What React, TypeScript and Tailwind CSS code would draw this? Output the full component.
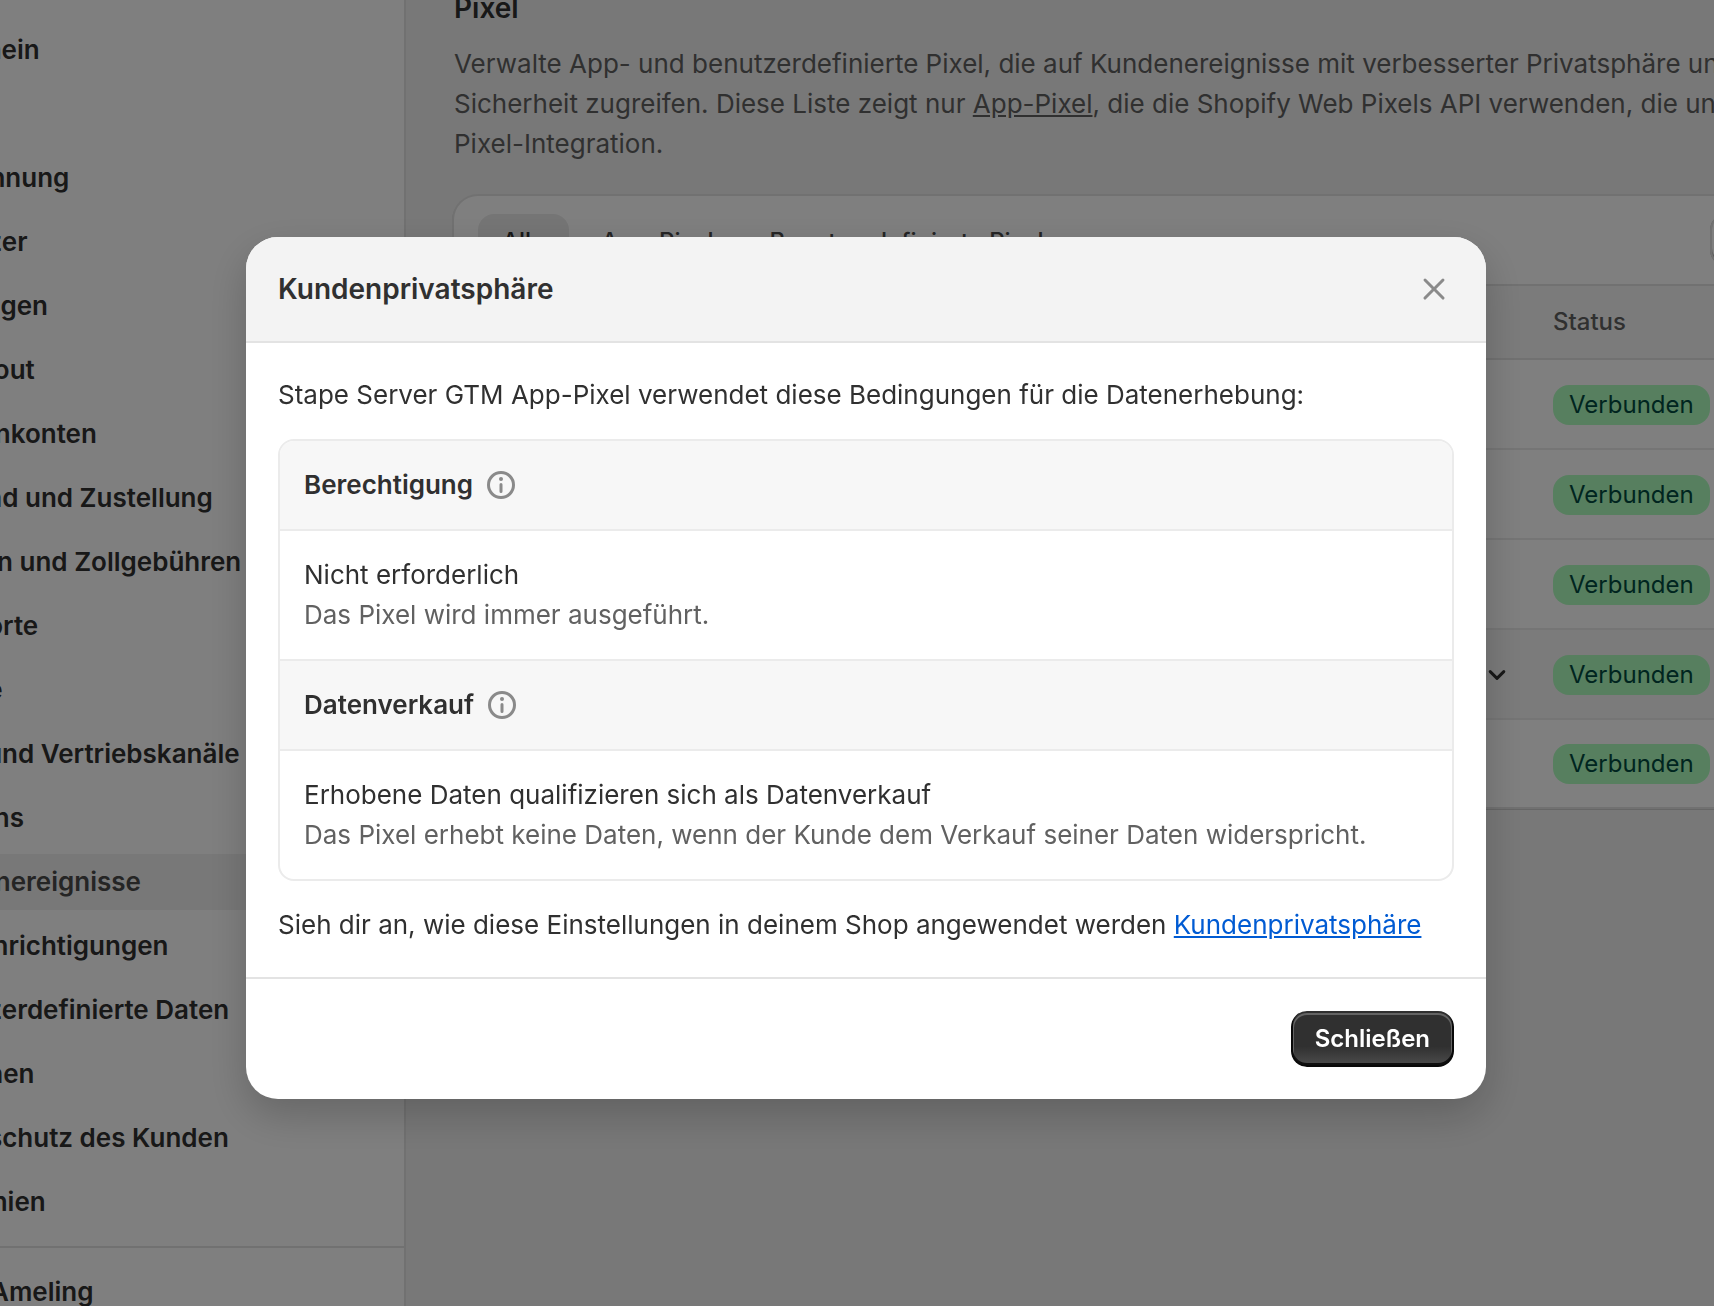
import { clsx } from 'clsx';

interface NavItem {
  label: string;
  active?: boolean;
}

interface PixelRow {
  id: string;
  status: string;
  expandable?: boolean;
}

interface PrivacySection {
  title: string;
  value: string;
  description: string;
}

const navItems: NavItem[] = [
  { label: 'Allgemein' },
  { label: 'Plan' },
  { label: 'Abrechnung' },
  { label: 'Benutzer' },
  { label: 'Zahlungen' },
  { label: 'Checkout' },
  { label: 'Kundenkonten' },
  { label: 'Versand und Zustellung' },
  { label: 'Steuern und Zollgebühren' },
  { label: 'Standorte' },
  { label: 'Märkte' },
  { label: 'Apps und Vertriebskanäle' },
  { label: 'Domains' },
  { label: 'Kundenereignisse', active: true },
  { label: 'Benachrichtigungen' },
  { label: 'Benutzerdefinierte Daten' },
  { label: 'Sprachen' },
  { label: 'Datenschutz des Kunden' },
  { label: 'Richtlinien' },
];

const tabs = ['Alle', 'App-Pixel', 'Benutzerdefinierte Pixel'];

const pixelRows: PixelRow[] = [
  { id: '1', status: 'Verbunden' },
  { id: '2', status: 'Verbunden' },
  { id: '3', status: 'Verbunden' },
  { id: '4', status: 'Verbunden', expandable: true },
  { id: '5', status: 'Verbunden' },
];

const sections: PrivacySection[] = [
  {
    title: 'Berechtigung',
    value: 'Nicht erforderlich',
    description: 'Das Pixel wird immer ausgeführt.',
  },
  {
    title: 'Datenverkauf',
    value: 'Erhobene Daten qualifizieren sich als Datenverkauf',
    description: 'Das Pixel erhebt keine Daten, wenn der Kunde dem Verkauf seiner Daten widerspricht.',
  },
];

const InfoIcon = () => (
  <svg className="size-10 text-[#8a8a8a]" viewBox="0 0 20 20" fill="currentColor" aria-hidden="true">
    <path d="M10 14a.75.75 0 0 1-.75-.75v-3.5a.75.75 0 0 1 1.5 0v3.5a.75.75 0 0 1-.75.75Z" />
    <path d="M9 7a1 1 0 1 1 2 0 1 1 0 0 1-2 0Z" />
    <path
      fillRule="evenodd"
      d="M17 10a7 7 0 1 1-14 0 7 7 0 0 1 14 0Zm-1.5 0a5.5 5.5 0 1 0-11 0 5.5 5.5 0 0 0 11 0Z"
    />
  </svg>
);

const CloseIcon = () => (
  <svg className="size-10" viewBox="0 0 20 20" fill="currentColor" aria-hidden="true">
    <path d="M13.97 15.03a.75.75 0 1 0 1.06-1.06l-3.97-3.97 3.97-3.97a.75.75 0 0 0-1.06-1.06l-3.97 3.97-3.97-3.97a.75.75 0 0 0-1.06 1.06l3.97 3.97-3.97 3.97a.75.75 0 1 0 1.06 1.06l3.97-3.97 3.97 3.97Z" />
  </svg>
);

const ChevronIcon = () => (
  <svg className="size-8" viewBox="0 0 16 16" fill="none" stroke="currentColor" aria-hidden="true">
    <path d="m4.6 5.8 3.4 3.4 3.4-3.4" strokeWidth={1.5} strokeLinecap="round" strokeLinejoin="round" />
  </svg>
);

const Sidebar = () => (
  <nav className="-ml-[110px] w-[516px] shrink-0 border-r-2 border-[#e3e3e3] bg-white pt-[22px]">
    <ul className="flex flex-col gap-2 pb-4">
      {navItems.map((item) => (
        <li key={item.label}>
          <a
            href="#"
            className={clsx(
              'mr-6 flex h-14 items-center rounded-2xl pl-6 font-semibold whitespace-nowrap',
              item.active ? 'bg-[#f1f1f1] text-[#4a4a4a]' : 'text-[#303030]',
            )}
          >
            {item.label}
          </a>
        </li>
      ))}
    </ul>
    <div className="border-t-2 border-[#e3e3e3] py-6 pl-[100px] font-semibold">Ameling</div>
  </nav>
);

const PixelTable = () => (
  <div className="rounded-3xl bg-white shadow-[0_0_0_2px_#e3e3e3,0_1px_0_2px_#cccccc]">
    <div className="flex h-[88px] items-start gap-2 px-6 pt-[18px]">
      {tabs.map((tab, index) => (
        <button
          key={tab}
          type="button"
          className={clsx(
            'h-14 rounded-2xl px-6 text-2xl font-medium',
            index === 0 ? 'bg-[#ebebeb] text-[#303030]' : 'text-[#4a4a4a]',
          )}
        >
          {tab}
        </button>
      ))}
      <button
        type="button"
        aria-label="Suchen und filtern"
        className="ml-auto h-[52px] w-[148px] rounded-2xl shadow-[inset_0_0_0_2px_#e3e3e3,inset_0_-2px_0_2px_#b5b5b5]"
      />
    </div>
    <table className="w-full table-fixed">
      <thead>
        <tr className="h-[74px] border-y-2 border-[#e3e3e3] bg-[#f7f7f7] text-left text-2xl text-[#616161]">
          <th aria-label="Pixel" />
          <th className="w-[329px] font-medium">Status</th>
        </tr>
      </thead>
      <tbody>
        {pixelRows.map((row) => (
          <tr
            key={row.id}
            className={clsx(
              'h-[90px] border-b-2 border-[#ebebeb] last:h-[88px] last:border-b-0',
              row.expandable && 'bg-[#f7f7f7]',
            )}
          >
            <td className="pr-10 text-right">
              {row.expandable && (
                <button type="button" aria-label="Details anzeigen" className="align-middle">
                  <ChevronIcon />
                </button>
              )}
            </td>
            <td>
              <span className="inline-block rounded-2xl bg-[#affebf] px-4 align-middle text-2xl leading-10 font-normal text-[#014b40]">
                {row.status}
              </span>
            </td>
          </tr>
        ))}
      </tbody>
    </table>
  </div>
);

const PrivacyModal = () => (
  <div className="fixed inset-0 flex items-center justify-center bg-black/50 pt-[30px] pl-[18px]">
    <div
      role="dialog"
      aria-modal="true"
      aria-labelledby="modal-title"
      className="w-full max-w-[1240px] overflow-hidden rounded-[32px] bg-white shadow-[0_16px_40px_rgba(0,0,0,0.2)]"
    >
      <header className="flex items-center justify-between border-b-2 border-[#e3e3e3] bg-[#f3f3f3] p-8">
        <h2 id="modal-title" className="text-[28px] leading-10 font-semibold">
          Kundenprivatsphäre
        </h2>
        <button type="button" aria-label="Schließen" className="text-[#8a8a8a]">
          <CloseIcon />
        </button>
      </header>

      <div className="flex flex-col gap-6 p-8">
        <p>Stape Server GTM App-Pixel verwendet diese Bedingungen für die Datenerhebung:</p>

        <div className="divide-y-2 divide-[#ebebeb] overflow-hidden rounded-2xl border-2 border-[#ebebeb]">
          {sections.map((section) => (
            <section key={section.title} className="divide-y-2 divide-[#ebebeb]">
              <div className="flex items-center gap-2 bg-[#f7f7f7] p-6">
                <h3 className="font-semibold">{section.title}</h3>
                <InfoIcon />
              </div>
              <div className="p-6">
                <p>{section.value}</p>
                <p className="text-[#616161]">{section.description}</p>
              </div>
            </section>
          ))}
        </div>

        <p>
          Sieh dir an, wie diese Einstellungen in deinem Shop angewendet werden{' '}
          <a href="#" className="text-[#005bd3] underline">
            Kundenprivatsphäre
          </a>
        </p>
      </div>

      <footer className="flex justify-end border-t-2 border-[#e3e3e3] p-8">
        <button
          type="button"
          className="h-14 rounded-2xl bg-[#303030] bg-[linear-gradient(180deg,rgba(48,48,48,0)_63%,rgba(255,255,255,0.15)_100%)] px-6 text-2xl font-semibold text-white shadow-[inset_0_-2px_0_2px_rgba(0,0,0,0.8),inset_0_0_0_2px_#303030,inset_0_1px_0_3px_rgba(255,255,255,0.25)]"
        >
          Schließen
        </button>
      </footer>
    </div>
  </div>
);

export default function App() {
  return (
    <div className="flex h-screen overflow-hidden bg-[#f1f1f1] font-[Inter,sans-serif] text-[26px] leading-10 font-normal text-[#303030]">
      <Sidebar />

      <main className="-mt-3 -mr-[168px] min-w-0 flex-1 pl-12">
        <h1 className="mb-4 text-[28px] leading-10 font-semibold">Pixel</h1>
        <p className="mb-8 whitespace-nowrap text-[#616161]">
          Verwalte App- und benutzerdefinierte Pixel, die auf Kundenereignisse mit verbesserter Privatsphäre und
          <br />
          Sicherheit zugreifen. Diese Liste zeigt nur{' '}
          <a href="#" className="underline">
            App-Pixel
          </a>
          , die die Shopify Web Pixels API verwenden, die unsere
          <br />
          Pixel-Integration.
        </p>
        <PixelTable />
      </main>

      <PrivacyModal />
    </div>
  );
}
